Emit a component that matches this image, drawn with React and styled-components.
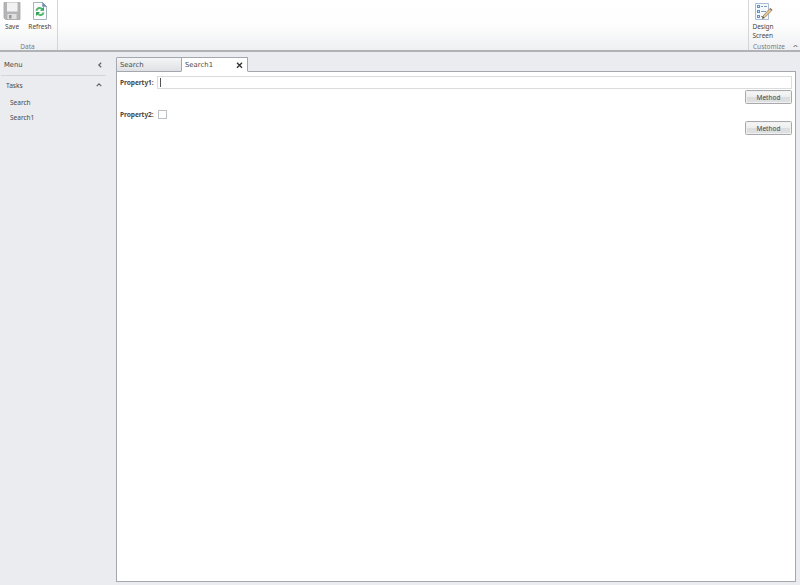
import React from 'react';
import styled, { createGlobalStyle } from 'styled-components';

const Global = createGlobalStyle`
  * { box-sizing: border-box; }
  html, body { margin: 0; height: 100%; overflow: hidden; }
  body { font: 6.5px/9px "Noto Sans", "Open Sans", sans-serif; color: #484848; background: #ebecf0; }
  button { font: inherit; color: inherit; }
`;

const Screen = styled.div`
  width: 800px;
  height: 585px;
  display: flex;
  flex-direction: column;
`;

const Ribbon = styled.header`
  height: 52px;
  flex: none;
  display: flex;
  justify-content: space-between;
  background: linear-gradient(#fff 0, #fdfdfd 50%, #eff0f2 100%);
  border-bottom: 2px solid #b0b2b6;
`;

const RibbonGroup = styled.section`
  width: ${(p) => p.$width}px;
  display: flex;
  flex-direction: column;
  justify-content: space-between;
  border-${(p) => p.$edge}: 1px solid #d4d6d9;
`;

const Tools = styled.div`
  display: flex;
`;

const Tool = styled.button`
  width: ${(p) => p.$width}px;
  padding: 2px 0 0;
  border: 0;
  background: none;
  display: flex;
  flex-direction: column;
  align-items: center;
  gap: 2px;
  white-space: pre-line;
  text-align: ${(p) => p.$align || 'center'};
  svg { display: block; }
`;

const GroupFooter = styled.div`
  display: flex;
  justify-content: ${(p) => (p.$spread ? 'space-between' : 'center')};
  align-items: center;
  height: 8px;
  padding: 0 ${(p) => (p.$spread ? '2px 0 4px' : '2px 0 0')};
  color: #777a80;
`;

const Body = styled.div`
  flex: 1;
  min-height: 0;
  display: flex;
  padding: 5px 4px 3px 0;
`;

const Sidebar = styled.nav`
  width: 106px;
  margin-right: 10px;
  flex: none;
`;

const SideHeading = styled.div`
  height: ${(p) => p.$height}px;
  display: flex;
  align-items: center;
  justify-content: space-between;
  padding: 0 ${(p) => (p.$wide ? '3px 2px' : '4px 0')} ${(p) => p.$inset}px;
  font-family: ${(p) => (p.$wide ? '"DejaVu Sans", sans-serif' : 'inherit')};
  font-size: ${(p) => (p.$wide ? 6.8 : 6.6)}px;
`;

const Divider = styled.div`
  height: 1px;
  margin-left: 1px;
  background: #d3d5da;
`;

const TaskList = styled.ul`
  list-style: none;
  margin: 0;
  padding: 1px 0 0 10px;
`;

const Task = styled.li`
  height: 14.5px;
  line-height: 15px;
`;

const Workspace = styled.main`
  flex: 1;
  min-width: 0;
  display: flex;
  flex-direction: column;
`;

const Tabs = styled.div`
  height: 15px;
  display: flex;
  align-items: flex-end;
  margin-bottom: -1px;
  z-index: 1;
`;

const Tab = styled.div`
  width: ${(p) => (p.$active ? 67 : 66)}px;
  margin-right: ${(p) => (p.$active ? 0 : -1)}px;
  height: 15px;
  display: flex;
  align-items: center;
  justify-content: space-between;
  padding: 1px 4px 0 3px;
  border: 1px solid #a4a7ad;
  border-bottom-color: ${(p) => (p.$active ? '#fff' : '#a4a7ad')};
  border-radius: 1px 1px 0 0;
  background: ${(p) => (p.$active ? '#fff' : 'linear-gradient(#f4f5f6, #dfe1e4)')};
  font-family: "DejaVu Sans", sans-serif;
  font-size: 6.9px;
`;

const Panel = styled.section`
  flex: 1;
  width: 680px;
  border: 1px solid #a4a7ad;
  background: #fff;
  padding: 4px 3px;
`;

const Field = styled.label`
  display: flex;
  align-items: center;
  height: ${(p) => p.$height}px;
`;

const FieldLabel = styled.span`
  width: 38px;
  font-weight: 700;
  font-size: 6.6px;
  letter-spacing: -0.08px;
  white-space: nowrap;
`;

const TextBox = styled.span`
  flex: 1;
  height: 13px;
  margin-left: -1px;
  border: 1px solid #d9dbdd;
  padding: 1px 2px;
`;

const Caret = styled.span`
  display: block;
  width: 1px;
  height: 9px;
  background: #555;
`;

const CheckBox = styled.span`
  width: 9px;
  height: 9px;
  border: 1px solid #bcbfc3;
  background: #fff;
`;

const ActionRow = styled.div`
  display: flex;
  justify-content: flex-end;
  margin: ${(p) => p.$margin};
`;

const ActionButton = styled.button`
  width: 47px;
  height: 14px;
  padding: 0;
  border: 1px solid #a7a9ac;
  border-radius: 1.5px;
  background: linear-gradient(#f7f7f8 0, #ededee 50%, #dcdddf 52%, #dfe0e2 100%);
  box-shadow: inset 0 0 0 1px #f0f0f1;
  line-height: 13px;
`;

const SaveIcon = () => (
  <svg width="18" height="18" viewBox="0 0 18 18">
    <path d="M1 .5h16v17H2.5L1 16z" fill="#b5b5b7" stroke="#a6a6a8" strokeWidth=".8" />
    <path d="M4 .5h10.5v9H4z" fill="#f2f2f3" />
    <path d="M4.5 12h9v5h-9z" fill="#e0e0e1" />
    <path d="M6 13h2.5v3.5H6z" fill="#97979a" />
  </svg>
);

const RefreshIcon = () => (
  <svg width="16" height="18" viewBox="0 0 16 18">
    <path d="M1.5.5h9l4 4v13h-13z" fill="#f9fbfd" stroke="#a7b2bf" />
    <path d="M10.5.5v4h4z" fill="#7790b1" stroke="#7790b1" strokeWidth=".6" />
    <path d="M4.3 8.7C5 5.8 8.4 5 10.3 7.2M11.6 10.5c-.8 2.8-4 3.5-6 1.1" fill="none" stroke="#51b66b" strokeWidth="1.9" />
    <path d="M12 4.7v4H8zM4 14v-4h4z" fill="#349f54" />
  </svg>
);

const DesignIcon = () => (
  <svg width="19" height="18" viewBox="0 0 19 18">
    <path d="M1.5 1.5h13v16h-13z" fill="#f5f9fd" stroke="#a9bed6" />
    <path d="M3 3h3v3H3zM3 8h3v3H3zM3 13h3v3H3z" fill="#6193c9" />
    <path d="M4 4h1v1H4zM4 9h1v1H4zM4 14h1v1H4z" fill="#d8e8f7" />
    <path d="M7 4.5h2m1 0h3M7 9.5h5M7 14.5h2" stroke="#819cba" />
    <path d="M9 14l7-7.5 2 1.8-7.2 7.2-2.5 1z" fill="#e3c58c" stroke="#8b795f" strokeWidth=".7" />
    <path d="M16 6.5l2 1.8" stroke="#a17060" strokeWidth="1.3" />
    <path d="M8.3 16.5l.6-2 1.4 1.4z" fill="#444" />
  </svg>
);

const Chevron = ({ left, small }) => (
  <svg width={small ? 5 : 6} height="6" viewBox="0 0 6 6">
    <path d={left ? 'M4.2.7L1.8 3l2.4 2.3' : 'M.7 4.2L3 1.9l2.3 2.3'} fill="none" stroke="#60636a" strokeWidth="1.2" />
  </svg>
);

const CloseIcon = () => (
  <svg width="7" height="7" viewBox="0 0 7 7">
    <path d="M1 .7l5 5M6 .7l-5 5" stroke="#333" strokeWidth="1.4" />
  </svg>
);

export default function App() {
  return (
    <>
      <Global />
      <Screen>
        <Ribbon>
          <RibbonGroup $width={58} $edge="right">
            <Tools>
              <Tool $width={24}><SaveIcon />Save</Tool>
              <Tool $width={32}><RefreshIcon />Refresh</Tool>
            </Tools>
            <GroupFooter>Data</GroupFooter>
          </RibbonGroup>
          <RibbonGroup $width={52} $edge="left">
            <Tools>
              <Tool $width={28} $align="left"><DesignIcon />{'Design\nScreen'}</Tool>
            </Tools>
            <GroupFooter $spread><span>Customize</span><Chevron small /></GroupFooter>
          </RibbonGroup>
        </Ribbon>
        <Body>
          <Sidebar>
            <SideHeading $height={18} $inset={4} $wide>Menu<Chevron left /></SideHeading>
            <Divider />
            <SideHeading $height={18} $inset={6}>Tasks<Chevron /></SideHeading>
            <TaskList>
              <Task>Search</Task>
              <Task>Search1</Task>
            </TaskList>
          </Sidebar>
          <Workspace>
            <Tabs>
              <Tab>Search</Tab>
              <Tab $active>Search1<CloseIcon /></Tab>
            </Tabs>
            <Panel>
              <Field $height={13}><FieldLabel>Property1:</FieldLabel><TextBox><Caret /></TextBox></Field>
              <ActionRow $margin="1px 0 5px"><ActionButton>Method</ActionButton></ActionRow>
              <Field $height={11}><FieldLabel>Property2:</FieldLabel><CheckBox /></Field>
              <ActionRow $margin="1px 0 0"><ActionButton>Method</ActionButton></ActionRow>
            </Panel>
          </Workspace>
        </Body>
      </Screen>
    </>
  );
}
